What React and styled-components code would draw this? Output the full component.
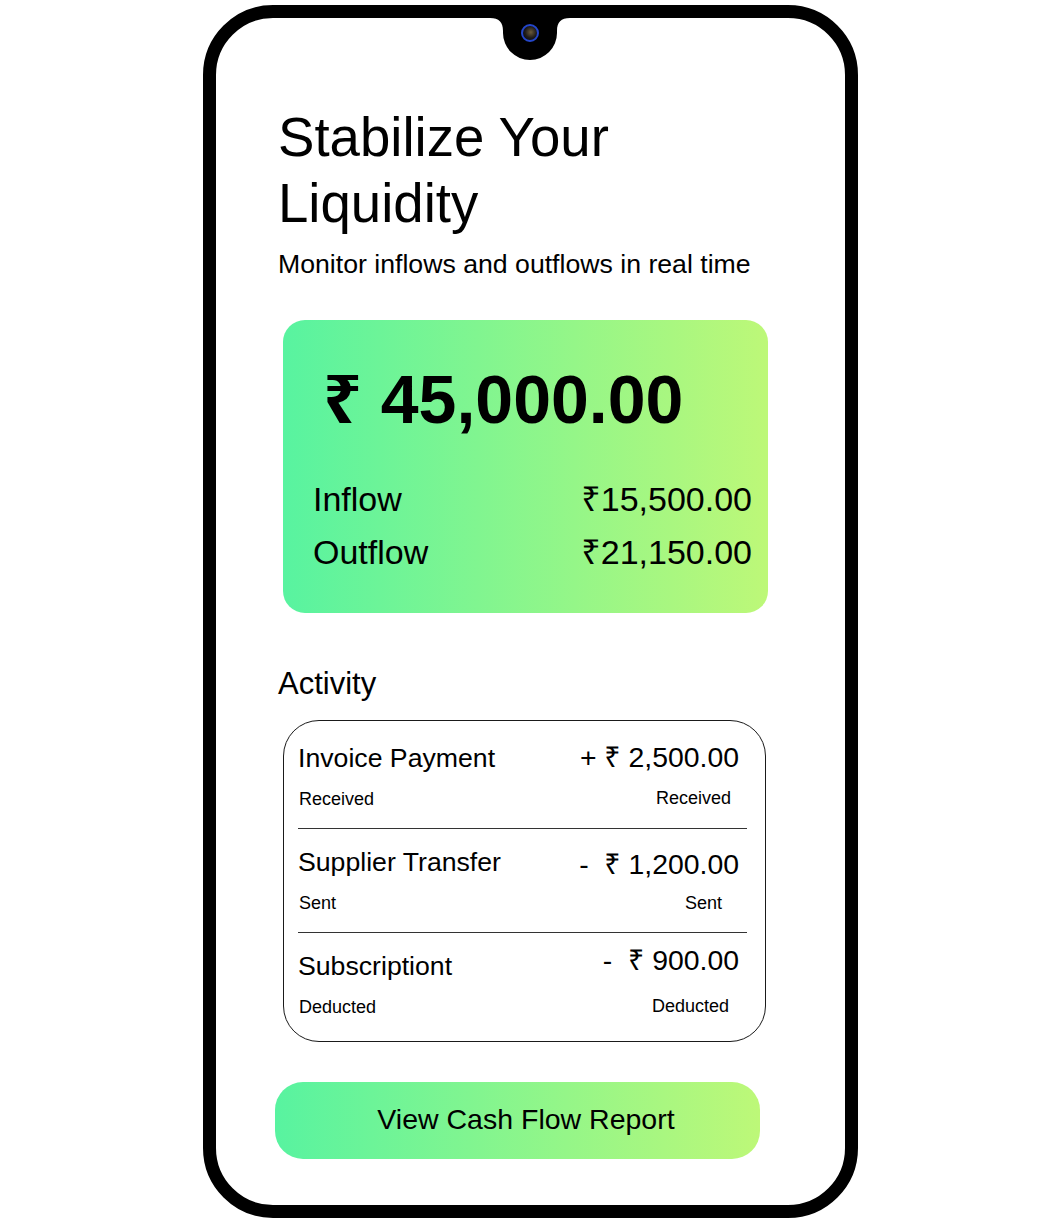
import React from 'react';
import styled, { createGlobalStyle } from 'styled-components';

const GlobalStyle = createGlobalStyle`
  body {
    margin: 0;
    background: #fff;
    color: #000;
    font-family: 'Liberation Sans', Arial, 'Noto Sans', sans-serif;
  }
`;

const Stage = styled.div`
  width: 1062px;
  height: 1222px;
  box-sizing: border-box;
  padding: 5px 0 0 203px;
`;

const Phone = styled.div`
  position: relative;
  box-sizing: border-box;
  width: 655px;
  height: 1213px;
  border: 13px solid #000;
  border-radius: 70px;
  background: #fff;
`;

const Notch = styled.svg`
  position: absolute;
  top: 0;
  left: 274px;
  width: 80px;
  height: 45px;
`;

const Content = styled.div`
  display: flex;
  flex-direction: column;
  align-items: flex-start;
  padding: 87px 0 0 60px;
`;

const Title = styled.h1`
  margin: 0 0 0 2px;
  font-size: 54.6px;
  font-weight: 400;
  line-height: 66px;
  width: 380px;
`;

const Subtitle = styled.p`
  margin: 11px 0 0 2px;
  font-size: 26.67px;
  line-height: 32px;
`;

const BalanceCard = styled.div`
  box-sizing: border-box;
  width: 485px;
  margin: 40px 0 0 7px;
  padding: 39px 16px 41px 30px;
  border-radius: 22px;
  background: linear-gradient(90deg, #58f3a0 0%, #bdf878 100%);
  display: flex;
  flex-direction: column;
`;

const Balance = styled.div`
  font-size: 68px;
  font-weight: 700;
  line-height: 80px;
  margin-left: 10px;
  margin-bottom: 40px;
`;

const FlowRow = styled.div`
  display: flex;
  justify-content: space-between;
  font-size: 34px;
  line-height: 40px;
  & + & {
    margin-top: 13px;
  }
`;

const SectionLabel = styled.h2`
  margin: 53px 0 0 2px;
  font-size: 31px;
  font-weight: 400;
  line-height: 36px;
`;

const ActivityBox = styled.div`
  box-sizing: border-box;
  width: 483px;
  margin: 18px 0 0 7px;
  padding: 4px 18px 5px 14px;
  border: 1px solid #1a1a1a;
  border-radius: 36px;
`;

const ActivityRow = styled.div`
  display: flex;
  justify-content: space-between;
  padding: 16.5px 0 18.5px;
  border-bottom: 1px solid #333;
  &:last-child {
    border-bottom: none;
  }
`;

const Col = styled.div`
  display: flex;
  flex-direction: column;
  align-items: ${(p) => (p.$right ? 'flex-end' : 'flex-start')};
`;

const RowTitle = styled.div`
  font-size: 26.67px;
  line-height: 32px;
  white-space: pre;
`;

const RowAmount = styled.div`
  font-size: 28.4px;
  line-height: 32px;
  margin-top: ${(p) => p.$dy || 0}px;
  margin-right: 8px;
  white-space: pre;
`;

const RowSub = styled.div`
  font-size: 18px;
  line-height: 22px;
  margin-top: ${(p) => 14 + (p.$dy || 0)}px;
  margin-right: ${(p) => p.$inset || 0}px;
  margin-left: 1px;
`;

const ReportButton = styled.button`
  box-sizing: border-box;
  width: 485px;
  height: 77px;
  margin: 40px 0 0 -1px;
  padding: 0 0 3px 17px;
  border: none;
  border-radius: 28px;
  background: linear-gradient(90deg, #58f3a0 0%, #bdf878 100%);
  font-family: inherit;
  font-size: 28.5px;
  line-height: 32px;
  color: #000;
  cursor: pointer;
`;

const activity = [
  { title: 'Invoice Payment', amount: '+ ₹ 2,500.00', status: 'Received', dy: -1, subDy: -0.5, inset: 16 },
  { title: 'Supplier Transfer', amount: '-  ₹ 1,200.00', status: 'Sent', dy: 2, subDy: 0, inset: 25 },
  { title: 'Subscriptiont', amount: '-  ₹ 900.00', status: 'Deducted', dy: -6, subDy: -1, inset: 18 },
];

function CameraNotch() {
  return (
    <Notch viewBox="0 0 80 45">
      <defs>
        <radialGradient id="lens" cx="0.55" cy="0.45" r="0.6">
          <stop offset="0" stopColor="#6b5a3a" />
          <stop offset="0.6" stopColor="#1d1a1a" />
          <stop offset="1" stopColor="#0a0a14" />
        </radialGradient>
      </defs>
      <path d="M0 0 H80 C71 0 67 4 67 13 V15 A27 27 0 0 1 13 15 V13 C13 4 9 0 0 0 Z" fill="#000" />
      <circle cx="40" cy="15" r="8" fill="url(#lens)" stroke="#2446c9" strokeWidth="2" />
    </Notch>
  );
}

export default function App() {
  return (
    <>
      <GlobalStyle />
      <Stage>
        <Phone>
          <CameraNotch />
          <Content>
            <Title>Stabilize Your Liquidity</Title>
            <Subtitle>Monitor inflows and outflows in real time</Subtitle>

            <BalanceCard>
              <Balance>₹ 45,000.00</Balance>
              <FlowRow>
                <span>Inflow</span>
                <span>₹15,500.00</span>
              </FlowRow>
              <FlowRow>
                <span>Outflow</span>
                <span>₹21,150.00</span>
              </FlowRow>
            </BalanceCard>

            <SectionLabel>Activity</SectionLabel>
            <ActivityBox>
              {activity.map((a) => (
                <ActivityRow key={a.title}>
                  <Col>
                    <RowTitle>{a.title}</RowTitle>
                    <RowSub>{a.status}</RowSub>
                  </Col>
                  <Col $right>
                    <RowAmount $dy={a.dy}>{a.amount}</RowAmount>
                    <RowSub $dy={a.subDy - a.dy} $inset={a.inset}>{a.status}</RowSub>
                  </Col>
                </ActivityRow>
              ))}
            </ActivityBox>

            <ReportButton>View Cash Flow Report</ReportButton>
          </Content>
        </Phone>
      </Stage>
    </>
  );
}
